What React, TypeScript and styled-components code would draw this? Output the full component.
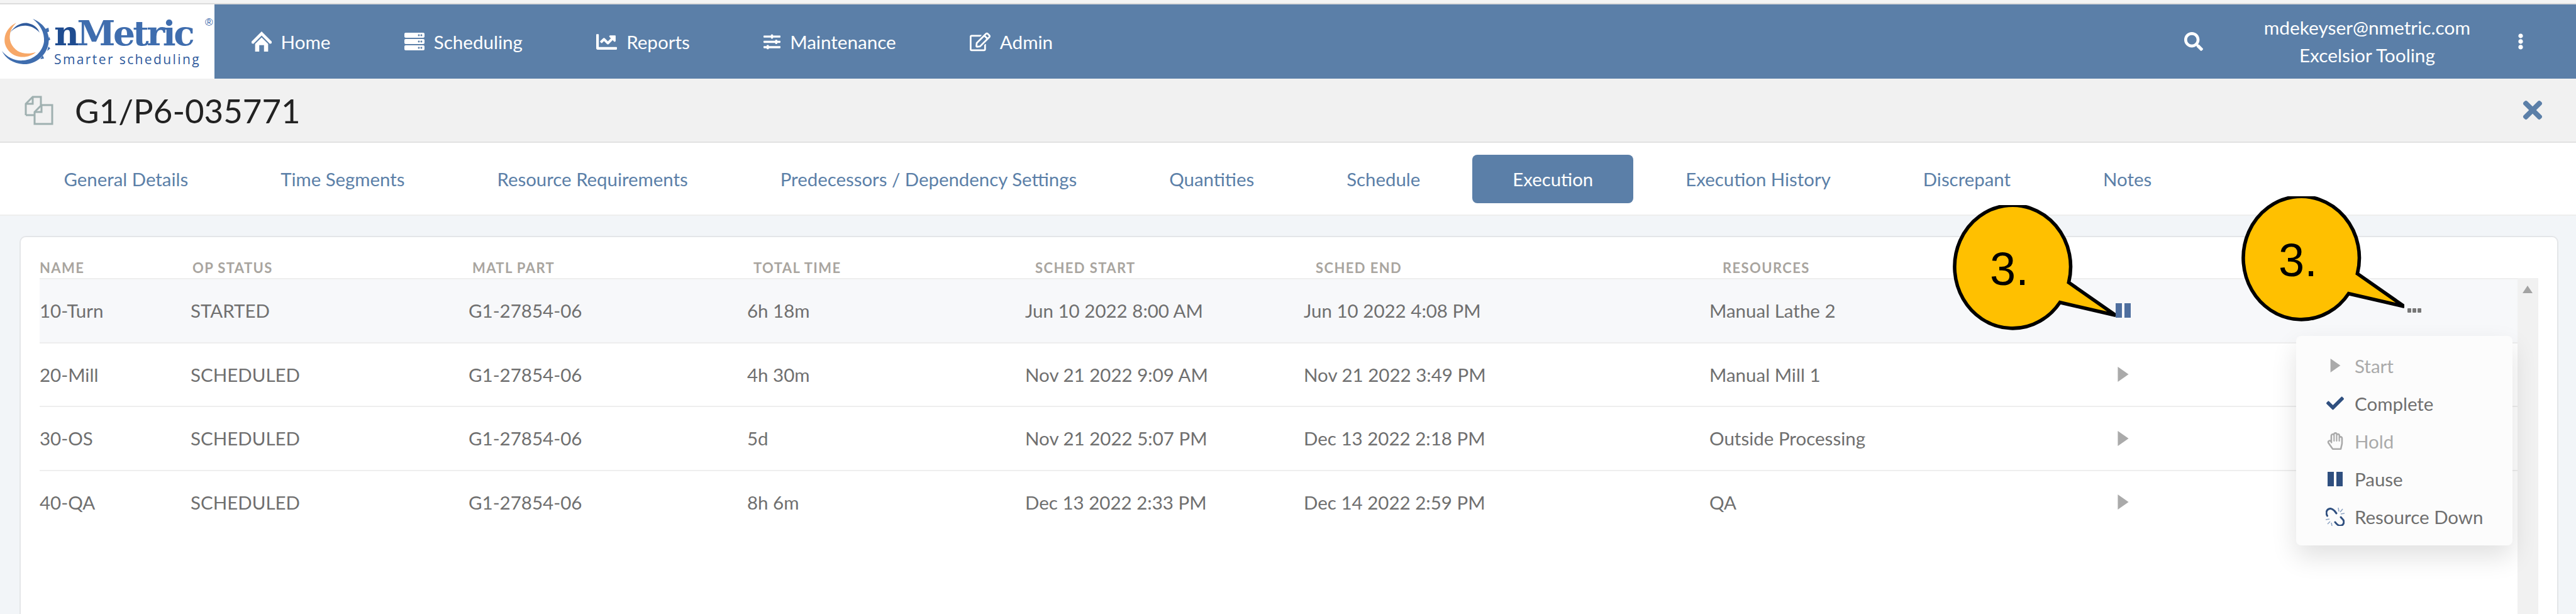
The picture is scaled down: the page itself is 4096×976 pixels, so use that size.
import React from 'react';
import styled, { createGlobalStyle } from 'styled-components';
import {
  FaCheck,
  FaChartLine,
  FaEllipsisV,
  FaRegEdit,
  FaRegHandPaper,
  FaSearch,
  FaServer,
  FaSlidersH,
  FaTimes,
} from 'react-icons/fa';

const GlobalStyle = createGlobalStyle`
  * {
    box-sizing: border-box;
  }
  html, body {
    margin: 0;
    height: 100%;
  }
  body {
    font-family: Lato, "Open Sans", sans-serif;
    background-color: #f2f5f8;
    overflow: hidden;
  }
`;

const Page = styled.div`
  position: relative;
  display: flex;
  flex-direction: column;
  height: 976px;
  width: 4096px;
  overflow: hidden;
`;
const TopStrip = styled.div`
  height: 7px;
  flex: none;
  background-color: #f4f4f4;
  border-bottom: 2px solid #dcdcdc;
`;
const Header = styled.header`
  display: flex;
  align-items: stretch;
  flex: none;
  height: 118px;
  background-color: #5b7fa8;
  color: #fff;
`;
const LogoBox = styled.div`
  display: flex;
  align-items: center;
  width: 341px;
  flex: none;
  background-color: #fff;
  padding-left: 2px;
`;
const LogoText = styled.div`
  position: relative;
  margin-left: 6px;
  width: 250px;
`;
const LogoName = styled.div`
  font-family: "DejaVu Serif", serif;
  font-weight: 700;
  font-size: 55px;
  line-height: 52px;
  letter-spacing: -3.5px;
  color: #3f6dae;
  white-space: nowrap;
  b {
    color: #1f4c90;
    font-weight: 700;
  }
  sup {
    position: absolute;
    top: 0;
    left: 240px;
    font-family: "Liberation Sans", sans-serif;
    font-weight: 400;
    font-size: 17px;
    line-height: 17px;
    letter-spacing: 0;
  }
`;
const LogoTagline = styled.div`
  margin-top: 4px;
  font-family: "Open Sans", sans-serif;
  font-size: 21px;
  line-height: 22px;
  letter-spacing: 2.4px;
  color: #2f5a9c;
  white-space: nowrap;
`;
const Nav = styled.nav`
  display: flex;
  align-items: center;
`;
const NavItem = styled.a`
  display: flex;
  align-items: center;
  gap: 15px;
  padding: 0 58.6px;
  font-size: 29.6px;
  color: #fff;
  svg {
    flex: none;
  }
`;
const UserArea = styled.div`
  display: flex;
  align-items: center;
  margin-left: auto;
  padding-right: 75px;
`;
const User = styled.div`
  margin: 0 67px 0 97px;
  text-align: center;
  font-size: 29.8px;
  line-height: 44px;
`;
const TitleBar = styled.div`
  display: flex;
  align-items: center;
  flex: none;
  height: 102px;
  padding: 0 47px 0 39px;
  background-color: #f1f1f1;
  border-bottom: 2px solid #e2e2e2;
`;
const Title = styled.h1`
  margin: 0 0 0 34px;
  font-size: 52.8px;
  font-weight: 400;
  color: #222;
`;
const CloseButton = styled.button`
  display: flex;
  margin-left: auto;
  padding: 0;
  border: 0;
  background: none;
  color: #5b7fa8;
`;
const Tabs = styled.div`
  display: flex;
  align-items: center;
  flex: none;
  height: 116px;
  padding-left: 28px;
  background-color: #fff;
  border-bottom: 2px solid #eeeeee;
`;
const Tab = styled.a<{ $active?: boolean }>`
  display: flex;
  align-items: center;
  height: 77px;
  margin: 0 9.3px;
  padding: 0 64.2px;
  border-radius: 8px;
  font-size: 29.4px;
  color: ${(p) => (p.$active ? '#fff' : '#5b7fa8')};
  background-color: ${(p) => (p.$active ? '#5b7fa8' : 'transparent')};
`;
const Content = styled.main`
  flex: 1;
  padding: 32px 28px 0 31px;
  min-height: 0;
`;
const Card = styled.section`
  height: 100%;
  padding: 0 30px 0 30px;
  background-color: #fff;
  border: 2px solid #e4e6e8;
  border-bottom: 0;
  border-radius: 10px 10px 0 0;
`;
const HeaderRow = styled.div`
  display: grid;
  grid-template-columns: 243px 445px 447px 448px 446px 647px auto;
  align-items: center;
  height: 65px;
  padding-top: 31px;
  font-size: 22px;
  font-weight: 700;
  letter-spacing: 1.4px;
  color: #a9a59f;
`;
const TableBody = styled.div`
  display: flex;
  height: calc(100% - 65px);
`;
const Rows = styled.div`
  flex: 1;
`;
const Row = styled.div<{ $active?: boolean }>`
  display: grid;
  grid-template-columns: 240px 442px 443px 442px 443px 645px 646px 464px 1fr;
  align-items: center;
  height: 101.5px;
  font-size: 29.5px;
  color: #6f6f6f;
  border-top: 2px solid #eeeeee;
  background-color: ${(p) => (p.$active ? '#f7f8fa' : 'transparent')};
`;
const RowIcon = styled.span`
  display: flex;
  align-items: center;
  justify-content: center;
  width: 24px;
  color: #4f6f9f;
`;
const DotsIcon = styled.span`
  display: flex;
  gap: 2px;
  i {
    width: 6px;
    height: 7px;
    background-color: #777;
    border-radius: 1px;
  }
`;
const Scrollbar = styled.div`
  display: flex;
  justify-content: center;
  width: 33.5px;
  padding-top: 12px;
  background-color: #f1f1f1;
`;
const Menu = styled.div`
  position: absolute;
  left: 3651px;
  top: 534px;
  width: 344px;
  height: 333px;
  padding: 17px 0 0 47px;
  background-color: #fcfcfc;
  border-radius: 8px;
  box-shadow: 0 18px 40px rgba(0, 0, 0, 0.12);
`;
const MenuItem = styled.div<{ $disabled?: boolean }>`
  display: flex;
  align-items: center;
  height: 60px;
  font-size: 29.5px;
  color: ${(p) => (p.$disabled ? '#aaaaaa' : '#6f6f6f')};
`;
const MenuIcon = styled.span<{ $disabled?: boolean }>`
  display: flex;
  justify-content: center;
  width: 30px;
  margin-right: 16px;
  color: ${(p) => (p.$disabled ? '#aaaaaa' : '#2f4f7f')};
`;
const Callout = styled.div<{ $left: number; $top: number }>`
  position: absolute;
  left: ${(p) => p.$left}px;
  top: ${(p) => p.$top}px;
  width: 261px;
  height: 205px;
  svg {
    display: block;
  }
`;
const CalloutLabel = styled.span`
  position: absolute;
  left: 61px;
  top: 59px;
  font-family: "Liberation Sans", Arial, sans-serif;
  font-size: 74px;
  line-height: 86px;
  color: #000;
`;

const navItems = [
  { label: 'Home', icon: <HomeIcon /> },
  { label: 'Scheduling', icon: <FaServer size={32} /> },
  { label: 'Reports', icon: <FaChartLine size={33} /> },
  { label: 'Maintenance', icon: <FaSlidersH size={27} /> },
  { label: 'Admin', icon: <FaRegEdit size={33} /> },
];

const tabs = [
  'General Details',
  'Time Segments',
  'Resource Requirements',
  'Predecessors / Dependency Settings',
  'Quantities',
  'Schedule',
  'Execution',
  'Execution History',
  'Discrepant',
  'Notes',
];

const columns = [
  'NAME',
  'OP STATUS',
  'MATL PART',
  'TOTAL TIME',
  'SCHED START',
  'SCHED END',
  'RESOURCES',
];

const rows = [
  ['10-Turn', 'STARTED', 'G1-27854-06', '6h 18m', 'Jun 10 2022 8:00 AM', 'Jun 10 2022 4:08 PM', 'Manual Lathe 2'],
  ['20-Mill', 'SCHEDULED', 'G1-27854-06', '4h 30m', 'Nov 21 2022 9:09 AM', 'Nov 21 2022 3:49 PM', 'Manual Mill 1'],
  ['30-OS', 'SCHEDULED', 'G1-27854-06', '5d', 'Nov 21 2022 5:07 PM', 'Dec 13 2022 2:18 PM', 'Outside Processing'],
  ['40-QA', 'SCHEDULED', 'G1-27854-06', '8h 6m', 'Dec 13 2022 2:33 PM', 'Dec 14 2022 2:59 PM', 'QA'],
];

function HomeIcon() {
  return (
    <svg width="32" height="32" viewBox="0 0 34 34" fill="currentColor">
      <path d="M17 0 34 17v3l-3 1L17 7 3 21l-3-1v-3z" />
      <path d="M6 21 17 10l11 11v13h-7V23h-8v11H6z" />
    </svg>
  );
}

function PlayIcon({ width, height, color }: { width: number; height: number; color: string }) {
  return (
    <svg width={width} height={height} viewBox="0 0 10 14" fill={color}>
      <path d="M0 0 10 7 0 14z" />
    </svg>
  );
}

function PauseIcon() {
  return (
    <svg width="24" height="23" viewBox="0 0 24 23" fill="currentColor">
      <rect x="0" y="0" width="10" height="23" />
      <rect x="14" y="0" width="10" height="23" />
    </svg>
  );
}

function BrokenLinkIcon() {
  return (
    <svg width="30" height="29" viewBox="0 0 30 29" fill="none">
      <g stroke="#2f4f7f" strokeWidth="3" strokeLinecap="round">
        <path d="M2.5 13C-.5 8 1.5 2 7 1.5c3-.3 5 1.500 7 3.500l3 4" />
        <path d="M24 15l4 4.500c2.500 5-1 9.500-6 9-3-.3-5-3-7-5.500" />
      </g>
      <g stroke="#8fa5c4" strokeWidth="1.600">
        <path d="M20 0l1 6M27 2l-4 5M30 9l-6 1M0 19l6-1M3 26l4-4M10 29l-1-5" />
      </g>
    </svg>
  );
}

function CopyIcon() {
  return (
    <svg width="46" height="48" viewBox="0 0 46 48" fill="none" stroke="#9fb0b0" strokeWidth="3">
      <path d="M2 32V14L13 3h13v13" />
      <path d="M13 3v11H2" />
      <path d="M2 32h14" />
      <path d="M16 46V27l11-11h17v30z" fill="#f1f1f1" />
      <path d="M27 16v11H16" />
    </svg>
  );
}

function Logo() {
  return (
    <svg width="78" height="76" viewBox="0 0 78 76">
      <path d="M50 2C70 10 78 26 75 42 71 62 53 75 35 74 19 73 7 65 1 53 10 64 22 69 35 68 52 67 66 54 68 38 69 24 62 11 50 2z" fill="#3f6dae" />
      <path d="M70 18l5-2 1 6-4 2zM76 30l2 5-4 2zM75 46l3 3-5 4zM66 60l2 5-6 1z" fill="#3f6dae" />
      <path d="M24 8C10 15 3 28 6 42c3 10 11 18 22 20 10 2 20-1 27-7-10 3-21 3-29-2C16 46 12 36 14 26c1-7 5-13 10-18z" fill="#f7a868" />
      <path d="M14 24C22 12 33 7 43 9c9 2 15 7 18 15-5-6-12-10-20-11-11-1-20 3-27 11z" fill="#2f5a9c" />
    </svg>
  );
}

function CalloutShape() {
  return (
    <svg width="261" height="205" viewBox="0 0 280 220">
      <path
        d="M200 132 280 188 185 166A99 105 0 1 1 200 132z"
        fill="#ffc000"
        stroke="#000"
        strokeWidth="6"
      />
    </svg>
  );
}

const App = () => (
  <Page>
    <GlobalStyle />
    <TopStrip />
    <Header>
      <LogoBox>
        <Logo />
        <LogoText>
          <LogoName>
            <b>n</b>Metric<sup>®</sup>
          </LogoName>
          <LogoTagline>Smarter scheduling</LogoTagline>
        </LogoText>
      </LogoBox>
      <Nav>
        {navItems.map((item) => (
          <NavItem key={item.label}>
            {item.icon}
            {item.label}
          </NavItem>
        ))}
      </Nav>
      <UserArea>
        <FaSearch size={30} />
        <User>
          mdekeyser@nmetric.com
          <br />
          Excelsior Tooling
        </User>
        <FaEllipsisV size={26} />
      </UserArea>
    </Header>
    <TitleBar>
      <CopyIcon />
      <Title>G1/P6-035771</Title>
      <CloseButton>
        <FaTimes size={44} />
      </CloseButton>
    </TitleBar>
    <Tabs>
      {tabs.map((tab) => (
        <Tab key={tab} $active={tab === 'Execution'}>
          {tab}
        </Tab>
      ))}
    </Tabs>
    <Content>
      <Card>
        <HeaderRow>
          {columns.map((col) => (
            <span key={col}>{col}</span>
          ))}
        </HeaderRow>
        <TableBody>
          <Rows>
            {rows.map((row, i) => (
              <Row key={row[0]} $active={i === 0}>
                {row.map((cell) => (
                  <span key={cell}>{cell}</span>
                ))}
                <RowIcon>
                  {i === 0 ? (
                    <PauseIcon />
                  ) : (
                    <PlayIcon width={18} height={24} color="#aaaaaa" />
                  )}
                </RowIcon>
                {i === 0 && (
                  <DotsIcon>
                    <i />
                    <i />
                    <i />
                  </DotsIcon>
                )}
              </Row>
            ))}
          </Rows>
          <Scrollbar>
            <svg width="16" height="12" viewBox="0 0 16 12" fill="#a3a3a3">
              <path d="M8 0 16 12H0z" />
            </svg>
          </Scrollbar>
        </TableBody>
      </Card>
    </Content>
    <Menu>
      <MenuItem $disabled>
        <MenuIcon $disabled>
          <PlayIcon width={19} height={22} color="#aaaaaa" />
        </MenuIcon>
        Start
      </MenuItem>
      <MenuItem>
        <MenuIcon>
          <FaCheck size={28} />
        </MenuIcon>
        Complete
      </MenuItem>
      <MenuItem $disabled>
        <MenuIcon $disabled>
          <FaRegHandPaper size={28} />
        </MenuIcon>
        Hold
      </MenuItem>
      <MenuItem>
        <MenuIcon>
          <PauseIcon />
        </MenuIcon>
        Pause
      </MenuItem>
      <MenuItem>
        <MenuIcon>
          <BrokenLinkIcon />
        </MenuIcon>
        Resource Down
      </MenuItem>
    </Menu>
    <Callout $left={3103} $top={326}>
      <CalloutShape />
      <CalloutLabel>3.</CalloutLabel>
    </Callout>
    <Callout $left={3562} $top={312}>
      <CalloutShape />
      <CalloutLabel>3.</CalloutLabel>
    </Callout>
  </Page>
);

export default App;
